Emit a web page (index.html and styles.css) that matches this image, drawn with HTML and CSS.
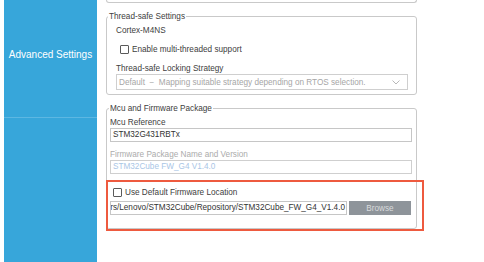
FILE: index.html
```html
<!DOCTYPE html>
<html lang="en">
<head>
    <meta charset="UTF-8">
    <title>Project Settings</title>
    <link rel="stylesheet" href="styles.css">
</head>
<body>
    <div class="page">
        <div class="sidebar">
            <div class="side-item">Advanced Settings</div>
        </div>

        <div class="main">
            <div class="prev-group"></div>

            <fieldset class="group group-thread">
                <legend>Thread-safe Settings</legend>
                <div class="text core">Cortex-M4NS</div>
                <label class="check check-mt">
                    <span class="box"></span>
                    <span>Enable multi-threaded support</span>
                </label>
                <div class="text label-strategy">Thread-safe Locking Strategy</div>
                <div class="select">
                    <span>Default &nbsp;&minus;&nbsp; Mapping suitable strategy depending on RTOS selection.</span>
                    <svg width="8" height="5" viewBox="0 0 8 5"><polyline points="0.5,0.5 4,4 7.5,0.5" fill="none" stroke="#b8b8b8" stroke-width="1"/></svg>
                </div>
            </fieldset>

            <fieldset class="group group-mcu">
                <legend>Mcu and Firmware Package</legend>
                <div class="text label-ref">Mcu Reference</div>
                <div class="input">STM32G431RBTx</div>
                <div class="text disabled label-fw">Firmware Package Name and Version</div>
                <div class="input input-disabled">STM32Cube FW_G4 V1.4.0</div>

                <div class="location">
                    <label class="check check-loc">
                        <span class="box"></span>
                        <span>Use Default Firmware Location</span>
                    </label>
                    <div class="path-row">
                        <div class="input path"><span>rs/Lenovo/STM32Cube/Repository/STM32Cube_FW_G4_V1.4.0</span></div>
                        <button class="browse">Browse</button>
                    </div>
                    <div class="highlight"></div>
                </div>
            </fieldset>
        </div>
    </div>
</body>
</html>
```

FILE: styles.css
```css
html, body {
    margin: 0;
    padding: 0;
    background: #ffffff;
}
body {
    font-family: "Liberation Sans", Arial, sans-serif;
    font-size: 8.2px;
    color: #404040;
}
.page {
    display: flex;
    align-items: stretch;
    min-height: 262px;
    height: 262px;
    overflow: hidden;
}
.sidebar {
    margin-left: 4px;
    width: 93px;
    background: #37a6da;
}
.side-item {
    box-sizing: border-box;
    height: 118px;
    padding-top: 49px;
    line-height: 12px;
    font-size: 10px;
    color: #ffffff;
    text-align: center;
    border-bottom: 1px solid #5db7e2;
}
.main {
    margin-left: 9px;
    width: 311px;
}
.prev-group {
    height: 2px;
    border: 1px solid #c9c9c9;
    border-top: none;
    border-radius: 0 0 3px 3px;
}
.group {
    margin: 0;
    border: 1px solid #c9c9c9;
    border-radius: 3px;
    min-width: 0;
}
.group legend {
    padding: 0 1px;
    margin-left: -8px;
    line-height: 11px;
    color: #404040;
}
.group-thread {
    margin-top: 8px;
    padding: 0 8px 4px 9px;
}
.group-mcu {
    margin-top: 8px;
    padding: 0 4px 13px 3px;
}
.group-mcu legend {
    margin-left: -1px;
}
.text {
    line-height: 11px;
    white-space: nowrap;
}
.disabled {
    color: #ababab;
}
.core {
    margin-top: 3px;
}
.check {
    display: flex;
    align-items: center;
    gap: 3px;
    height: 11px;
    line-height: 11px;
}
.check-mt {
    margin-top: 8px;
    padding-left: 4px;
}
.box {
    box-sizing: border-box;
    width: 9px;
    height: 9px;
    border: 1px solid #5a5a5a;
    border-radius: 1px;
    background: #ffffff;
}
.label-strategy {
    margin-top: 8px;
}
.select {
    box-sizing: border-box;
    height: 16px;
    border: 1px solid #cfcfcf;
    display: flex;
    align-items: center;
    justify-content: space-between;
    padding: 0 7px 0 2px;
    color: #a6a6a6;
    white-space: nowrap;
}
.label-ref {
    margin-top: 3px;
}
.input {
    box-sizing: border-box;
    height: 14px;
    line-height: 12px;
    border: 1px solid #c6c6c6;
    padding: 0 2px;
    color: #333333;
    white-space: nowrap;
    overflow: hidden;
}
.label-fw {
    margin-top: 7px;
}
.input-disabled {
    color: #a9c6e6;
    border-color: #cfcfcf;
}
.location {
    position: relative;
    margin-top: 13px;
}
.check-loc {
    padding-left: 3px;
}
.path-row {
    display: flex;
    gap: 2px;
    margin-top: 3px;
}
.path {
    width: 237px;
    display: flex;
    justify-content: flex-end;
    padding: 0 1px;
}
.browse {
    width: 62px;
    height: 14px;
    padding: 0;
    border: none;
    background: #8e949a;
    color: #d9dbdd;
    font-family: "Liberation Sans", Arial, sans-serif;
    font-size: 8.2px;
}
.highlight {
    position: absolute;
    left: -4px;
    top: -7px;
    width: 318px;
    height: 51px;
    box-sizing: border-box;
    border: 2px solid #ee5a3f;
}
```
